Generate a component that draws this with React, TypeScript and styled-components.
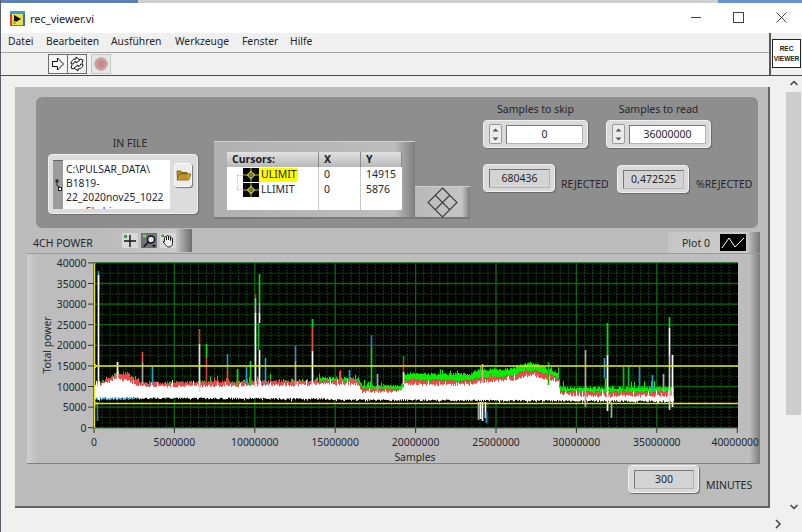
import React from 'react';
import styled, { createGlobalStyle } from 'styled-components';

const GlobalStyle = createGlobalStyle`
  html, body {
    margin: 0;
    padding: 0;
    background: #f0f0f0;
  }
  * {
    box-sizing: border-box;
  }
`;

const UI_FONT = `'Noto Sans', 'Open Sans', Arial, sans-serif`;

const Win = styled.div`
  width: 802px;
  height: 532px;
  display: flex;
  flex-direction: column;
  overflow: hidden;
  background: #f0f0f0;
  border-left: 1px solid #56606c;
  font-family: ${UI_FONT};
  color: #24262c;
`;

const TopStrip = styled.div`
  height: 3px;
  display: flex;
  flex: none;
`;

const StripPart = styled.div<{ $w?: number; $color: string }>`
  background: ${(p) => p.$color};
  ${(p) => (p.$w ? `width: ${p.$w}px;` : 'flex: 1;')}
`;

const TitleBar = styled.div`
  height: 30px;
  flex: none;
  display: flex;
  align-items: center;
  background: #fff;
  padding: 0 15px 0 9px;
`;

const TitleText = styled.span`
  margin-left: 5px;
  font-size: 11px;
  color: #222;
  margin-top: 1px;
`;

const WinButtons = styled.div`
  margin-left: auto;
  display: flex;
  align-items: center;
  gap: 32px;
  margin-top: -1px;
`;

const ChromeRow = styled.div`
  height: 43px;
  flex: none;
  display: flex;
  background: #f0f0f0;
  border-bottom: 1px solid #4c4c4c;
`;

const ChromeLeft = styled.div`
  flex: 1;
  display: flex;
  flex-direction: column;
`;

const MenuBar = styled.div`
  height: 20px;
  display: flex;
  align-items: center;
  padding: 0 0 3px 7px;
  font-size: 10.3px;
  border-bottom: 1px solid #a4a4a4;
`;

const MenuItem = styled.span<{ $w: number }>`
  width: ${(p) => p.$w}px;
  flex: none;
`;

const ToolBar = styled.div`
  flex: 1;
  display: flex;
  align-items: center;
  padding-left: 47px;
`;

const ToolButton = styled.div<{ $dim?: boolean }>`
  width: 20px;
  height: 20px;
  display: flex;
  align-items: center;
  justify-content: center;
  border: 1px solid ${(p) => (p.$dim ? '#c8c8c8' : '#6c6c6c')};
  background: ${(p) => (p.$dim ? '#e6e6e6' : '#f4f4f4')};
  margin-right: ${(p) => (p.$dim ? 0 : -1)}px;
`;

const ToolGap = styled.div`
  width: 5px;
`;

const RecSlot = styled.div`
  width: 33px;
  flex: none;
  margin-right: 0;
  border-left: 2px solid #5a5a5a;
  padding: 6px 1px 0 1px;
`;

const RecBox = styled.div`
  width: 29px;
  height: 29px;
  background: #fff;
  border: 1px solid #222;
  display: flex;
  flex-direction: column;
  align-items: center;
  justify-content: center;
  font-family: 'Liberation Sans', Arial, sans-serif;
  font-size: 6.5px;
  font-weight: bold;
  line-height: 10px;
  color: #222;
`;

const ContentRow = styled.div`
  flex: 1;
  display: flex;
  min-height: 0;
`;

const Canvas = styled.div`
  flex: 1;
  padding: 11px 0 0 14px;
`;

const VScroll = styled.div`
  width: 15px;
  flex: none;
  margin-right: 1px;
  display: flex;
  flex-direction: column;
  align-items: stretch;
  background: #f0f0f0;
`;

const ScrollArrow = styled.div`
  height: 16px;
  flex: none;
  display: flex;
  align-items: center;
  justify-content: center;
`;

const ScrollThumb = styled.div`
  height: 323px;
  background: #cdcdcd;
`;

const ScrollRest = styled.div`
  flex: 1;
`;

const HScroll = styled.div`
  height: 17px;
  flex: none;
  display: flex;
  align-items: center;
  justify-content: flex-end;
  padding-right: 19px;
  background: #f0f0f0;
`;

const Panel = styled.div`
  width: 755px;
  height: 421px;
  background: #bcbcbc;
  border-right: 2px solid #626262;
  border-bottom: 2px solid #626262;
  padding: 10px 8px 0 12px;
  display: flex;
  flex-direction: column;
`;

const TopPanel = styled.div`
  width: 722px;
  height: 131px;
  flex: none;
  margin-left: 9px;
  border-radius: 6px;
  background: #8e8e8e;
  padding-left: 12px;
  display: flex;
  align-items: flex-start;
`;

const InFileGroup = styled.div`
  width: 150px;
  margin-top: 39px;
  display: flex;
  flex-direction: column;
`;

const Caption = styled.div`
  font-size: 10.5px;
  line-height: 14px;
  text-align: center;
  color: #26262c;
  white-space: nowrap;
`;

const InFileCaption = styled(Caption)`
  padding-left: 14px;
  margin-bottom: 4px;
`;

const PathControl = styled.div`
  width: 150px;
  height: 60px;
  border-radius: 4px;
  background: #dcdcdc;
  border: 1px solid #efefef;
  box-shadow: 1px 1px 1px #6e6e6e;
  padding: 5px 6px 4px 4px;
  display: flex;
  align-items: flex-start;
`;

const LinkStrip = styled.div`
  width: 10px;
  height: 49px;
  flex: none;
  background: #9c9c9c;
  border-top: 1px solid #666;
  display: flex;
  align-items: center;
  justify-content: center;
`;

const PathField = styled.div`
  width: 107px;
  height: 49px;
  flex: none;
  background: #fff;
  overflow: hidden;
  padding: 2px 0 0 3px;
  font-size: 10.3px;
  line-height: 14px;
  color: #26262c;
`;

const BrowseButton = styled.div`
  width: 18px;
  height: 24px;
  margin: 3px 0 0 4px;
  flex: none;
  border-radius: 3px;
  background: #ececec;
  border: 1px solid #fafafa;
  box-shadow: 1px 1px 1px #777;
  display: flex;
  align-items: center;
  justify-content: center;
`;

const LegendFrame = styled.div`
  width: 201px;
  height: 78px;
  flex: none;
  margin: 44px 0 0 16px;
  padding: 10px 13px 10px 13px;
  background: linear-gradient(90deg, #b0b0b0, #bdbdbd 90%, #7e7e7e);
  border-top: 1px solid #cfcfcf;
  border-bottom: 2px solid #7a7a7a;
`;

const LegendTable = styled.div`
  height: 58px;
  background: #fff;
  display: grid;
  grid-template-columns: 92px 42px 41px;
  grid-template-rows: 15px 15px 15px 1fr;
  font-size: 10.5px;
  line-height: 14px;
`;

const HeadCell = styled.div`
  background: linear-gradient(180deg, #e2e2e2, #b8b8b8);
  border-right: 1px solid #8a8a8a;
  font-weight: 700;
  padding-left: 5px;
  color: #1c1c22;
`;

const NameCell = styled.div`
  display: flex;
  align-items: center;
  padding-left: 16px;
  border-right: 1px solid #c8c8c8;
  position: relative;
`;

const ValueCell = styled.div<{ $last?: boolean }>`
  padding-left: 5px;
  ${(p) => (p.$last ? '' : 'border-right: 1px solid #c8c8c8;')}
`;

const EmptyCell = styled.div<{ $last?: boolean }>`
  ${(p) => (p.$last ? '' : 'border-right: 1px solid #c8c8c8;')}
`;

const TreeLine = styled.div`
  position: absolute;
  left: 10px;
  top: 8px;
  width: 6px;
  height: 15px;
  border: 1px dotted #bbb;
  border-right: none;
`;

const CursorName = styled.span<{ $on?: boolean }>`
  padding: 0 1px 0 2px;
  height: 14px;
  line-height: 13px;
  width: 39px;
  background: ${(p) => (p.$on ? '#ffff00' : 'transparent')};
`;

const DiamondButton = styled.div`
  width: 55px;
  height: 33px;
  flex: none;
  margin-top: 89px;
  background: linear-gradient(90deg, #b8b8b8, #c6c6c6 85%, #7c7c7c);
  border-top: 1px solid #cfcfcf;
  border-bottom: 2px solid #767676;
  display: flex;
  align-items: center;
  justify-content: center;
`;

const RightBlock = styled.div`
  margin: 5px 0 0 13px;
  display: flex;
  flex-direction: column;
`;

const SampleRow = styled.div`
  display: flex;
  gap: 18px;
`;

const SampleField = styled.div`
  width: 105px;
  display: flex;
  flex-direction: column;
  gap: 4px;
`;

const NumericBox = styled.div<{ $w: number; $h?: number }>`
  width: ${(p) => p.$w}px;
  height: ${(p) => p.$h ?? 28}px;
  flex: none;
  border-radius: 4px;
  background: #dadada;
  border: 1px solid #f0f0f0;
  box-shadow: 1px 1px 1px #6a6a6a;
  display: flex;
  align-items: center;
  padding: 0 4px 0 5px;
`;

const Spinner = styled.div`
  width: 13px;
  height: 20px;
  flex: none;
  margin-right: 4px;
  border: 1px solid #9a9a9a;
  border-radius: 2px;
  background: #ececec;
  display: flex;
  flex-direction: column;
  align-items: center;
  justify-content: space-around;
`;

const Field = styled.div<{ $filled?: boolean }>`
  flex: 1;
  height: 19px;
  background: ${(p) => (p.$filled ? '#d4d4d4' : '#fff')};
  border: 1px solid #777;
  border-right-color: #b5b5b5;
  border-bottom-color: #b5b5b5;
  font-size: 10.5px;
  line-height: 17px;
  text-align: center;
  color: #26262c;
`;

const ResultRow = styled.div`
  display: flex;
  margin-top: 16px;
  align-items: flex-start;
`;

const ResultLabel = styled.div<{ $ml: number; $mr?: number }>`
  font-size: 10.5px;
  line-height: 14px;
  margin: 13px ${(p) => p.$mr ?? 0}px 0 ${(p) => p.$ml}px;
  white-space: nowrap;
  width: ${(p) => (p.$mr ? 47 : 60)}px;
  color: #26262c;
`;

const LowerBox = styled.div`
  margin-top: 1px;
`;

const FrameHeader = styled.div`
  height: 25px;
  flex: none;
  display: flex;
  align-items: flex-end;
`;

const ChartLabel = styled.div`
  width: 81px;
  flex: none;
  padding-left: 6px;
  font-size: 10.5px;
  line-height: 14px;
  margin-bottom: 3px;
  color: #26262c;
`;

const Palette = styled.div`
  width: 84px;
  height: 23px;
  flex: none;
  margin-bottom: 1px;
  display: flex;
  align-items: center;
  gap: 3px;
  padding: 0 0 0 14px;
  background: linear-gradient(90deg, #bcbcbc, #cacaca 80%, #6e6e6e);
`;

const PaletteButton = styled.div<{ $on?: boolean }>`
  width: 16px;
  height: 15px;
  background: ${(p) => (p.$on ? '#727272' : '#d8d8d8')};
  display: flex;
  align-items: center;
  justify-content: center;
`;

const PlotLegend = styled.div`
  margin-left: auto;
  width: 92px;
  height: 21px;
  flex: none;
  display: flex;
  align-items: center;
  padding-left: 14px;
  background: linear-gradient(90deg, #c6c6c6, #cccccc 85%, #767676);
  font-size: 10.5px;
`;

const PlotSwatch = styled.div`
  width: 26px;
  height: 17px;
  margin-left: 10px;
  background: #000;
  display: flex;
  align-items: center;
  justify-content: center;
`;

const GraphFrame = styled.div`
  width: 733px;
  height: 210px;
  flex: none;
  background: linear-gradient(90deg, #cfcfcf, #bdbdbd 1.4%, #bdbdbd 98.6%, #7c7c7c);
  border-top: 1px solid #9a9a9a;
  box-shadow: 0 1px 0 #7e7e7e;
  display: flex;
`;

const ChartSvg = styled.svg`
  display: block;
  font-family: ${UI_FONT};
  font-size: 10.4px;
  fill: #26262c;
`;

const MinutesRow = styled.div`
  display: flex;
  justify-content: flex-end;
  align-items: flex-start;
  padding: 2px 6px 0 0;
`;

const MinutesLabel = styled.div`
  width: 48px;
  margin: 13px 0 0 7px;
  font-size: 10.5px;
  line-height: 14px;
  color: #26262c;
`;

// ---- chart data, in screen pixels (the svg viewBox maps 1:1 to the window)

const PLOT = { x: 94, y: 263, w: 644, h: 165 };

type Pt = [number, number];

const WHITE_TOP: Pt[] = [[94, 386], [105, 383], [117, 379], [128, 381], [140, 386], [200, 386], [300, 385], [320, 384], [358, 384], [362, 392], [401, 391], [404, 384], [470, 385], [478, 382], [510, 380], [530, 375], [553, 380], [558, 382], [560, 394], [590, 396], [673, 396]];
const RED_TOP: Pt[] = [[94, 384], [105, 380], [117, 373], [128, 375], [140, 383], [200, 382], [300, 381], [320, 381], [358, 381], [362, 389], [401, 389], [404, 380], [470, 381], [478, 378], [510, 376], [530, 370], [553, 376], [558, 379], [560, 391], [590, 392], [673, 392]];
const GREEN_TOP: Pt[] = [[94, 384], [105, 379], [117, 370], [128, 372], [140, 383], [200, 381], [300, 380], [320, 378], [358, 378], [362, 386], [401, 386], [404, 374], [470, 374], [478, 370], [510, 369], [530, 362], [553, 371], [558, 373], [560, 388], [590, 388], [673, 387]];
const WHITE_BOTTOM: Pt[] = [[94, 397], [320, 398], [340, 399], [673, 400.5]];

// x, top, bottom, colour
const SPIKES: [number, number, number, string][] = [
  [98, 271, 290, '#2a9fd0'], [98, 275, 400, '#ffffff'], [97, 402, 421, '#2a7fb0'],
  [117, 362, 384, '#ffffff'],
  [142, 352, 362, '#f04848'], [142, 362, 384, '#a8a8a8'],
  [152, 367, 385, '#2a9fd0'],
  [199, 329, 344, '#c84040'], [199, 344, 392, '#e0e0e0'],
  [206, 344, 358, '#00e000'], [206, 358, 385, '#c84040'],
  [227, 354, 370, '#2a8fc0'], [227, 370, 385, '#f04848'],
  [237, 369, 385, '#00e000'],
  [246, 367, 385, '#2a9fd0'],
  [250, 361, 385, '#00e000'],
  [255, 294, 298, '#d02020'], [255, 298, 313, '#a8a8a8'], [255, 313, 390, '#ffffff'],
  [259, 274, 303, '#00e000'], [259, 303, 313, '#a8a8a8'], [259, 313, 323, '#ffffff'], [258, 323, 350, '#00c800'], [259, 350, 390, '#ffffff'],
  [265, 358, 385, '#2a9fd0'],
  [295, 346, 361, '#3a8fa0'], [295, 361, 385, '#a8a8a8'],
  [312, 319, 327, '#00e000'], [312, 327, 351, '#f04848'], [312, 351, 390, '#ffffff'],
  [340, 370, 382, '#f04848'], [349, 370, 380, '#2a9fd0'],
  [371, 335, 347, '#2a7fb0'], [371, 347, 390, '#00e000'],
  [377, 374, 392, '#a8a8a8'],
  [403, 356, 361, '#00a000'], [403, 361, 372, '#d02020'], [403, 372, 384, '#e0e0e0'],
  [478, 402, 420, '#a8a8a8'], [480, 402, 419, '#ffffff'], [482, 402, 421, '#ffffff'], [485, 402, 418, '#ffffff'], [486, 412, 423, '#2a8fc0'],
  [482, 364, 382, '#e8a0a0'], [548, 362, 385, '#00c000'],
  [585, 350, 407, '#a8a8a8'],
  [604, 358, 378, '#2a9fd0'], [605, 378, 394, '#00e000'],
  [607, 323, 355, '#00e000'], [607, 355, 411, '#ffffff'],
  [611, 402, 418, '#a8a8a8'],
  [623, 367, 392, '#00c000'], [628, 367, 390, '#00c000'],
  [639, 367, 388, '#2a8fc0'], [652, 375, 392, '#2a9fd0'], [663, 374, 392, '#a8a8a8'],
  [669, 317, 328, '#00e000'], [669, 328, 355, '#ffffff'], [669, 355, 410, '#cfcfcf'],
  [672, 355, 407, '#ffffff'],
];

const interp = (table: Pt[], x: number) => {
  for (let i = 1; i < table.length; i++) {
    if (x <= table[i][0]) {
      const [x0, y0] = table[i - 1];
      const [x1, y1] = table[i];
      return y0 + ((y1 - y0) * (x - x0)) / (x1 - x0 || 1);
    }
  }
  return table[table.length - 1][1];
};

let seed = 4711;
const rnd = () => {
  seed = (seed * 16807) % 2147483647;
  return seed / 2147483647;
};

const buildBands = () => {
  let white = '';
  let red = '';
  let green = '';
  let blue = '';
  for (let x = PLOT.x; x <= 673; x++) {
    const left = x < 320;
    const wt = interp(WHITE_TOP, x) + rnd() * 3 - 1.5 - (rnd() > 0.85 ? rnd() * 5 : 0);
    const wb = interp(WHITE_BOTTOM, x) + rnd() * 1.8 + (rnd() > 0.9 ? rnd() * 2 : 0);
    const rt = interp(RED_TOP, x) + rnd() * 2.4 - 1.2 - (rnd() > 0.88 ? rnd() * 5 : 0);
    const gt = interp(GREEN_TOP, x) + rnd() * 2.6 - 1.3 - (rnd() > 0.88 ? rnd() * 6 : 0);
    if (!left || rnd() > 0.6) green += `M${x + 0.5} ${gt.toFixed(1)}V${rt.toFixed(1)}`;
    red += `M${x + 0.5} ${rt.toFixed(1)}V${wt.toFixed(1)}`;
    white += `M${x + 0.5} ${wt.toFixed(1)}V${wb.toFixed(1)}`;
    if (x < 135) blue += `M${x + 0.5} ${wb.toFixed(1)}V${(wb + 1.5).toFixed(1)}`;
  }
  return { white, red, green, blue };
};

const BANDS = buildBands();

const range = (n: number) => Array.from({ length: n }, (_, i) => i);

const PowerChart = () => {
  const xStep = 80.4;
  const yStep = 20.6;
  const yZero = 427.7;
  return (
    <ChartSvg width={733} height={209} viewBox="27 254 733 209">
      <rect x={PLOT.x} y={PLOT.y} width={PLOT.w} height={PLOT.h} fill="#000" />
      {range(80).map((i) => (
        <line key={`vm${i}`} x1={PLOT.x + (i * xStep) / 10} x2={PLOT.x + (i * xStep) / 10} y1={PLOT.y} y2={PLOT.y + PLOT.h} stroke="#084a0a" strokeWidth={1} strokeDasharray="2 1" />
      ))}
      {range(16).map((i) => (
        <line key={`hm${i}`} x1={PLOT.x} x2={PLOT.x + PLOT.w} y1={yZero - (i * yStep) / 2} y2={yZero - (i * yStep) / 2} stroke="#084a0a" strokeWidth={1} strokeDasharray="2 1" />
      ))}
      {range(8).map((i) => (
        <line key={`vM${i}`} x1={PLOT.x + i * xStep} x2={PLOT.x + i * xStep} y1={PLOT.y} y2={PLOT.y + PLOT.h} stroke="#0a6410" strokeWidth={1.3} />
      ))}
      {range(9).map((i) => (
        <line key={`hM${i}`} x1={PLOT.x} x2={PLOT.x + PLOT.w} y1={yZero - i * yStep} y2={yZero - i * yStep} stroke="#0a6410" strokeWidth={1.3} />
      ))}

      <path d={BANDS.green} stroke="#00f000" fill="none" />
      <path d={BANDS.red} stroke="#f24a4a" fill="none" />
      <path d={BANDS.white} stroke="#fff" fill="none" />
      <path d={BANDS.blue} stroke="#58b8e0" fill="none" />
      {SPIKES.map(([x, top, bottom, color], i) => (
        <line key={i} x1={x + 0.5} x2={x + 0.5} y1={top} y2={bottom} stroke={color} strokeWidth={1.7} />
      ))}

      <line x1={PLOT.x} x2={PLOT.x + PLOT.w} y1={366} y2={366} stroke="#e8e800" strokeWidth={1.4} />
      <line x1={PLOT.x} x2={PLOT.x + PLOT.w} y1={403.5} y2={403.5} stroke="#e8e800" strokeWidth={1.4} />
      <line x1={94.5} x2={94.5} y1={PLOT.y} y2={PLOT.y + PLOT.h} stroke="#e8e800" strokeWidth={1.4} />
      <path d="M94 363l3 3-3 3M94 400.5l3 3-3 3" stroke="#e0e000" fill="none" />

      {range(9).map((i) => {
        const y = yZero - i * yStep;
        return (
          <g key={`yl${i}`}>
            <line x1={88} x2={94} y1={y} y2={y} stroke="#333" />
            <text x={86.5} y={y + 4} textAnchor="end">{i * 5000}</text>
          </g>
        );
      })}
      {range(9).map((i) => {
        const x = PLOT.x + i * xStep;
        return (
          <g key={`xl${i}`}>
            <line x1={x} x2={x} y1={428} y2={433} stroke="#333" />
            <text x={i === 8 ? 759 : x} y={446} textAnchor={i === 8 ? 'end' : 'middle'}>{i * 5000000}</text>
          </g>
        );
      })}
      <text x={415} y={461} textAnchor="middle">Samples</text>
      <text transform="translate(51 345) rotate(-90)" textAnchor="middle">Total power</text>
    </ChartSvg>
  );
};

// ---- small icons

const ViIcon = () => (
  <svg width="15" height="15" viewBox="0 0 15 15">
    <rect x="0.5" y="0.5" width="14" height="14" fill="#e8e048" stroke="#2f8fd8" />
    <rect x="0" y="0" width="15" height="3" fill="#2f9fe0" />
    <rect x="0" y="3" width="2" height="12" fill="#d04050" />
    <rect x="13" y="3" width="2" height="12" fill="#2f6fd0" />
    <path d="M4 4l7 4-7 4z" fill="#111" />
    <rect x="3" y="10" width="3" height="3" fill="#c8a820" />
  </svg>
);

const Minimize = () => (
  <svg width="11" height="11" viewBox="0 0 11 11">
    <line x1="1" x2="11" y1="5.5" y2="5.5" stroke="#444" />
  </svg>
);

const Maximize = () => (
  <svg width="11" height="11" viewBox="0 0 11 11">
    <rect x="0.5" y="0.5" width="10" height="10" fill="none" stroke="#444" />
  </svg>
);

const CloseIcon = () => (
  <svg width="11" height="11" viewBox="0 0 11 11">
    <path d="M0.5 0.5l10 10M10.5 0.5l-10 10" stroke="#444" />
  </svg>
);

const RunArrow = () => (
  <svg width="14" height="14" viewBox="0 0 14 14">
    <path d="M1.5 4.5h5v-3.5l6 6-6 6v-3.5h-5z" fill="#fff" stroke="#111" />
  </svg>
);

const RunLoop = () => (
  <svg width="16" height="16" viewBox="0 0 16 16" fill="#fff" stroke="#111" strokeWidth="1">
    <path d="M2 8c0-3 2-5 5-5V1l4 3-4 3V5.500c-1.600 0-2.700 1-2.700 2.500z" />
    <path d="M14 8c0 3-2 5-5 5v2l-4-3 4-3v1.500c1.600 0 2.700-1 2.700-2.500z" />
    <path d="M11 3l3 1-1 3M5 13l-3-1 1-3" fill="none" />
  </svg>
);

const AbortDot = () => (
  <svg width="14" height="14" viewBox="0 0 14 14">
    <circle cx="7" cy="7" r="6.200" fill="#d89a9e" stroke="#a8a8a8" />
    <circle cx="7" cy="7" r="4" fill="#c88a90" />
  </svg>
);

const LinkGlyph = () => (
  <svg width="7" height="14" viewBox="0 0 7 14">
    <rect x="0.5" y="1.500" width="3" height="3" fill="#222" />
    <path d="M2 4.500v3l3 2" stroke="#222" fill="none" />
    <rect x="3.500" y="9.500" width="3" height="3" fill="#fff" stroke="#222" />
  </svg>
);

const FolderIcon = () => (
  <svg width="15" height="12" viewBox="0 0 15 12">
    <path d="M1 2h4l1 1.500h5V5H4L1.500 10.500z" fill="#c89020" stroke="#5a4008" strokeWidth="0.7" />
    <path d="M3.500 5H15l-2.500 6H1z" fill="#e8b030" stroke="#5a4008" strokeWidth="0.7" />
    <path d="M4 7h8M3.500 9h8" stroke="#7a5a10" strokeWidth="0.7" />
  </svg>
);

const CursorIcon = () => (
  <svg width="16" height="14" viewBox="0 0 16 14" style={{ flex: 'none' }}>
    <rect width="16" height="14" fill="#060606" />
    <path d="M0 7h16M8 0v14" stroke="#b8b820" />
    <rect x="5.500" y="4.500" width="5" height="5" fill="none" stroke="#d8d860" transform="rotate(45 8 7)" />
  </svg>
);

const DiamondIcon = () => (
  <svg width="31" height="31" viewBox="0 0 31 31" fill="none" stroke="#3c3c3c" strokeWidth="1.100">
    <path d="M15.500 1L30 15.500 15.500 30 1 15.500z" />
    <path d="M8.250 8.250l14.500 14.500M22.750 8.250l-14.500 14.500" />
  </svg>
);

const Triangle = ({ down }: { down?: boolean }) => (
  <svg width="7" height="4" viewBox="0 0 7 4">
    <path d={down ? 'M0.500 0.500h6L3.500 3.500z' : 'M0.500 3.500h6L3.500 0.500z'} fill="#555" />
  </svg>
);

const CrossTool = () => (
  <svg width="14" height="14" viewBox="0 0 14 14">
    <path d="M7 1v12M1 7h12" stroke="#111" strokeWidth="1.400" />
    <rect x="1" y="1" width="3" height="3" fill="#3a9a4a" />
  </svg>
);

const ZoomTool = () => (
  <svg width="15" height="14" viewBox="0 0 15 14">
    <circle cx="9" cy="5.500" r="3.500" fill="#e0e0f0" stroke="#101020" strokeWidth="1.500" />
    <path d="M6.500 8l-5 5" stroke="#101020" strokeWidth="1.500" />
    <rect x="1" y="0.500" width="3" height="3" fill="#40f040" />
    <path d="M10 11h4l-2 2.500z" fill="#111" />
  </svg>
);

const HandTool = () => (
  <svg width="14" height="14" viewBox="0 0 14 14" fill="#f0f0f0" stroke="#111" strokeWidth="0.900">
    <path d="M3.500 8V3.500a1 1 0 0 1 2 0V6V2.500a1 1 0 0 1 2 0V6V3a1 1 0 0 1 2 0V6.500V5a1 1 0 0 1 2 0v4.500c0 2-1.500 3.500-3.500 3.500S5.500 12 4.500 10.500L2 8c.7-1 1.200-.8 1.500 0z" />
    <rect x="0.500" y="0.500" width="2.500" height="2.500" fill="#3a9a4a" stroke="none" />
  </svg>
);

const PlotLine = () => (
  <svg width="24" height="13" viewBox="0 0 24 13">
    <path d="M1 12L8 2l6 9 9-9" stroke="#fff" fill="none" />
  </svg>
);

const Chevron = ({ dir }: { dir: 'up' | 'down' | 'right' }) => {
  const d = { up: 'M1.500 6L5 2.500 8.500 6', down: 'M1.500 3L5 6.500 8.500 3', right: 'M3 1L7 5 3 9' }[dir];
  return (
    <svg width="10" height="10" viewBox="0 0 10 10">
      <path d={d} stroke="#444" strokeWidth="1.500" fill="none" />
    </svg>
  );
};

const MENU: [string, number][] = [
  ['Datei', 38],
  ['Bearbeiten', 65],
  ['Ausführen', 64],
  ['Werkzeuge', 67],
  ['Fenster', 48],
  ['Hilfe', 40],
];

const Numeric = ({ value }: { value: string }) => (
  <NumericBox $w={105}>
    <Spinner>
      <Triangle />
      <Triangle down />
    </Spinner>
    <Field>{value}</Field>
  </NumericBox>
);

const Indicator = ({ value, w }: { value: string; w: number }) => (
  <NumericBox $w={w}>
    <Field $filled>{value}</Field>
  </NumericBox>
);

const App: React.FC = () => (
  <>
    <GlobalStyle />
    <Win>
      <TopStrip>
        <StripPart $w={137} $color="#5c7fb8" />
        <StripPart $color="#cfcfcf" />
        <StripPart $w={84} $color="#6a90d0" />
      </TopStrip>
      <TitleBar>
        <ViIcon />
        <TitleText>rec_viewer.vi</TitleText>
        <WinButtons>
          <Minimize />
          <Maximize />
          <CloseIcon />
        </WinButtons>
      </TitleBar>
      <ChromeRow>
        <ChromeLeft>
          <MenuBar>
            {MENU.map(([label, w]) => (
              <MenuItem key={label} $w={w}>{label}</MenuItem>
            ))}
          </MenuBar>
          <ToolBar>
            <ToolButton><RunArrow /></ToolButton>
            <ToolButton><RunLoop /></ToolButton>
            <ToolGap />
            <ToolButton $dim><AbortDot /></ToolButton>
          </ToolBar>
        </ChromeLeft>
        <RecSlot>
          <RecBox>
            <span>REC</span>
            <span>VIEWER</span>
          </RecBox>
        </RecSlot>
      </ChromeRow>
      <ContentRow>
        <Canvas>
          <Panel>
            <TopPanel>
              <InFileGroup>
                <InFileCaption>IN FILE</InFileCaption>
                <PathControl>
                  <LinkStrip><LinkGlyph /></LinkStrip>
                  <PathField>
                    C:\PULSAR_DATA\<br />
                    B1819-<br />
                    22_2020nov25_1022<br />
                    rec_file.bin
                  </PathField>
                  <BrowseButton><FolderIcon /></BrowseButton>
                </PathControl>
              </InFileGroup>
              <LegendFrame>
                <LegendTable>
                  <HeadCell>Cursors:</HeadCell>
                  <HeadCell>X</HeadCell>
                  <HeadCell>Y</HeadCell>
                  <NameCell>
                    <TreeLine />
                    <CursorIcon />
                    <CursorName $on>ULIMIT</CursorName>
                  </NameCell>
                  <ValueCell>0</ValueCell>
                  <ValueCell $last>14915</ValueCell>
                  <NameCell>
                    <CursorIcon />
                    <CursorName>LLIMIT</CursorName>
                  </NameCell>
                  <ValueCell>0</ValueCell>
                  <ValueCell $last>5876</ValueCell>
                  <EmptyCell />
                  <EmptyCell />
                  <EmptyCell $last />
                </LegendTable>
              </LegendFrame>
              <DiamondButton><DiamondIcon /></DiamondButton>
              <RightBlock>
                <SampleRow>
                  <SampleField>
                    <Caption>Samples to skip</Caption>
                    <Numeric value="0" />
                  </SampleField>
                  <SampleField>
                    <Caption>Samples to read</Caption>
                    <Numeric value="36000000" />
                  </SampleField>
                </SampleRow>
                <ResultRow>
                  <Indicator value="680436" w={72} />
                  <ResultLabel $ml={6} $mr={9}>REJECTED</ResultLabel>
                  <LowerBox><Indicator value="0,472525" w={72} /></LowerBox>
                  <ResultLabel $ml={7}>%REJECTED</ResultLabel>
                </ResultRow>
              </RightBlock>
            </TopPanel>
            <FrameHeader>
              <ChartLabel>4CH POWER</ChartLabel>
              <Palette>
                <PaletteButton><CrossTool /></PaletteButton>
                <PaletteButton $on><ZoomTool /></PaletteButton>
                <PaletteButton><HandTool /></PaletteButton>
              </Palette>
              <PlotLegend>
                Plot 0
                <PlotSwatch><PlotLine /></PlotSwatch>
              </PlotLegend>
            </FrameHeader>
            <GraphFrame>
              <PowerChart />
            </GraphFrame>
            <MinutesRow>
              <Indicator value="300" w={71} />
              <MinutesLabel>MINUTES</MinutesLabel>
            </MinutesRow>
          </Panel>
        </Canvas>
        <VScroll>
          <ScrollArrow><Chevron dir="up" /></ScrollArrow>
          <ScrollThumb />
          <ScrollRest />
          <ScrollArrow><Chevron dir="down" /></ScrollArrow>
        </VScroll>
      </ContentRow>
      <HScroll><Chevron dir="right" /></HScroll>
    </Win>
  </>
);

export default App;
